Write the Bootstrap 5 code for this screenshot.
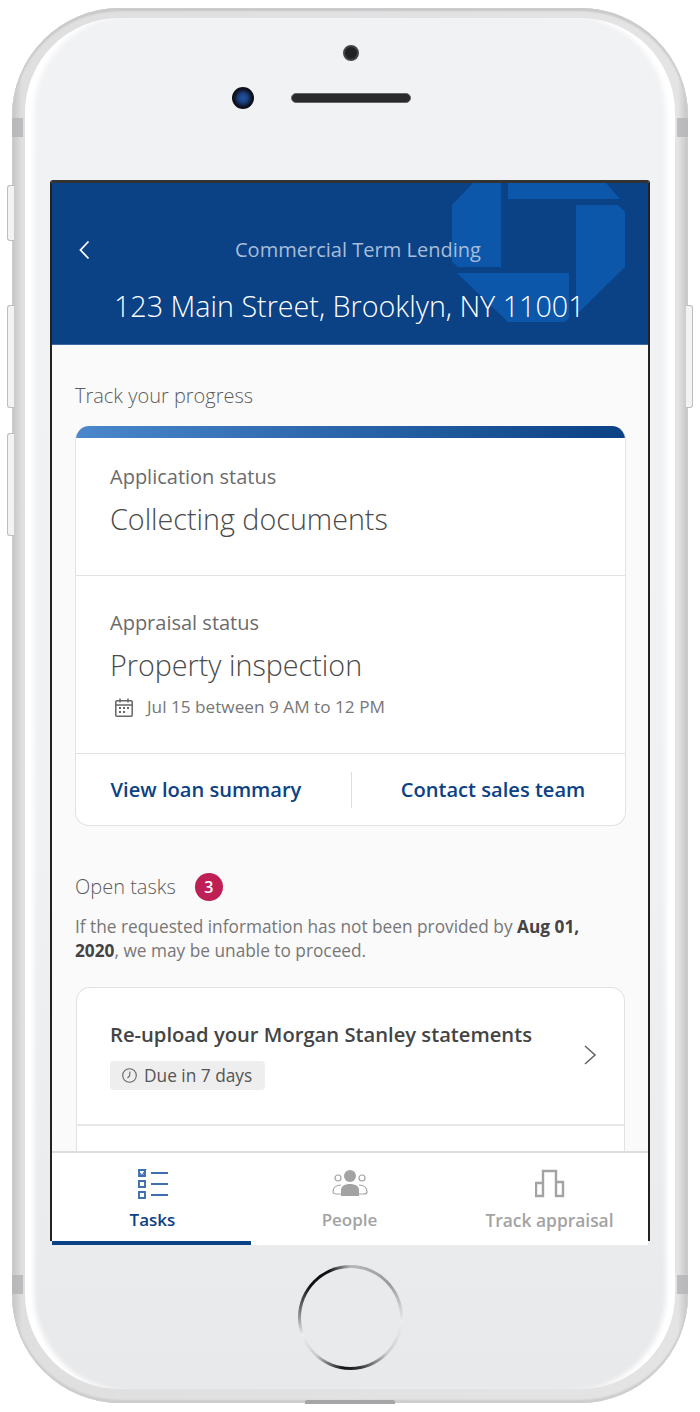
<!DOCTYPE html>
<html lang="en"><head><meta charset="utf-8"><title>Commercial Term Lending</title>
<link href="https://cdn.jsdelivr.net/npm/bootstrap@5.3.0/dist/css/bootstrap.min.css" rel="stylesheet">
<style>
html,body{margin:0;height:1412px;width:700px;overflow:hidden;background:#fff;font-family:"Open Sans","Liberation Sans",sans-serif}
.phone{position:relative;width:676px;height:1395px;margin:8px 0 0 12px;padding:10px 13px 14px;border-radius:108px;background:linear-gradient(90deg,#c4c4c6 0,#dfdfe0 1.5%,#e4e4e5 98.5%,#c4c4c6 100%);box-shadow:inset 0 0 2px 1px #cfcfd1,inset 0 3px 2px #c6c6c8,inset 0 -3px 2px #cccccd}
.shell{height:100%;display:flex;flex-direction:column;padding:0 25px;border-radius:95px;background:linear-gradient(180deg,#f1f2f4 0,#f0f1f3 60%,#e8e9eb 100%);box-shadow:inset 12px 0 5px -3px #fff,inset -12px 0 5px -3px #fff}
.bezel-top{height:162px;flex:none;position:relative}
.sensor{width:16px;height:16px;border-radius:50%;background:#222;border:2px solid #444;position:absolute;left:293px;top:27px}
.ear-row{position:absolute;left:182px;top:69px;display:flex;align-items:center;gap:37px}
.cam{width:22px;height:22px;border-radius:50%;background:radial-gradient(circle,#1c57b0 0,#1c3f7c 30%,#0b0f1c 60%,#1b1b1f 100%)}
.speaker{width:120px;height:10px;border-radius:5px;background:#2a2a2c;border:1px solid #666}
.side-btn{position:absolute;width:7px;border:1px solid #bdbdbf;border-right:0;background:#f3f3f3;border-radius:3px 0 0 3px}
.side-right{border:1px solid #bdbdbf;border-left:0;border-radius:0 3px 3px 0}
.btn1{left:-5px;top:177px;height:56px}.btn2{left:-5px;top:297px;height:103px}.btn3{left:-5px;top:425px;height:103px}.btn4{right:-5px;top:297px;height:103px}
.band{position:absolute;width:11px;height:19px;background:#b4b4b6;opacity:.8}
.band-a{left:0;top:110px}.band-b{right:0;top:110px}.band-c{left:0;top:1267px}.band-d{right:0;top:1267px}
.notch{position:absolute;left:293px;bottom:-1px;width:90px;height:4px;background:#a5a5a7;border-radius:2px 2px 0 0}
.screen{height:1061px;flex:none;display:flex;flex-direction:column;border-top:3px solid #333;border-left:2px solid #222;border-right:2px solid #222;border-radius:3px 3px 0 0;background:#fafafa;position:relative}
.app-head{height:162px;flex:none;background:#0b4185;position:relative;overflow:hidden;border-bottom:1px solid #3b6aa3}
.logo{position:absolute;left:-52px;top:-183px;width:700px;height:400px}
.head-in{position:relative;height:100%}
.back{position:absolute;left:26px;top:57px}
.sub-t{position:absolute;left:183px;top:53px;margin:0;font-size:20.05px;line-height:28px;font-weight:400;color:#a7bdd9;white-space:nowrap}
.main-t{position:absolute;left:62px;top:103px;margin:0;font-size:28.7px;line-height:40px;font-weight:300;color:#fff;white-space:nowrap}
.scroll{flex:1 1 auto;min-height:0;overflow:hidden;padding:0 23px}
.sec-t{font-size:20px;line-height:28px;font-weight:300;color:#5c5c5c;margin:37px 0 16px}
.track{background:#fff;border:1px solid #e2e2e2;border-top:0;border-radius:14px;overflow:hidden;width:551px}
.grad{height:12px;background:linear-gradient(90deg,#4a87cb,#0b4185)}
.st-block{padding:25px 34px 0;border-bottom:1px solid #e2e2e2}
.st-a{height:138px}.st-b{height:178px;padding-top:33px}
.st-l{font-size:20px;line-height:28px;font-weight:400;color:#6b6b6b;margin:0}
.st-v{font-size:28.7px;line-height:42px;font-weight:300;color:#4a4a4a;margin:7px 0 0}
.st-d{font-size:17.2px;line-height:24px;font-weight:400;color:#777;margin-top:9px;display:flex;align-items:center;gap:14px;padding-left:5px}
.act-row{height:71px;display:flex;align-items:center;padding-top:1px}
.act{text-align:center;font-size:20.1px;font-weight:600;color:#0b4185;text-decoration:none;white-space:nowrap}
.act-a{flex:0 0 275px;padding-right:15px}.act-b{flex:1 1 0;padding-left:9px}
.vr-line{width:1px;height:36px;background:#ddd;flex:none}
.open-row{display:flex;align-items:center;gap:19px;margin:47px 0 14px}
.open-row .sec-t{margin:0}
.count{width:28px;height:28px;border-radius:50%;background:#be1f54;color:#fff;font-size:16px;font-weight:600;display:flex;align-items:center;justify-content:center}
.warn{font-size:17.28px;line-height:24px;font-weight:400;color:#777;margin:0 0 24px;padding-right:14px}
.warn b{font-weight:700;color:#444}
.task-card{background:#fff;border:1px solid #e2e2e2;border-bottom:0;border-radius:14px 14px 0 0;width:549px;margin-left:1px}
.task-item{height:138px;padding:31px 33px 0;position:relative;border-bottom:2px solid #e8e8e8}
.task-item:last-child{border-bottom:0}
.task-t{font-size:20.2px;line-height:30px;font-weight:600;color:#444;margin:0;white-space:nowrap}
.due{display:inline-flex;align-items:center;gap:7px;height:29px;padding:0 13px 0 12px;margin-top:12px;background:#eee;border-radius:4px;font-size:17.3px;color:#555;font-weight:400}
.chev{position:absolute;right:27px;top:56px}
.tabs{height:94px;flex:none;background:#fff;border-top:2px solid #ddd;display:flex;margin-bottom:-4px;position:relative;z-index:2}
.tab{flex:0 0 auto;display:flex;flex-direction:column;align-items:center;color:#a3a3a3;font-size:17px;font-weight:600;text-decoration:none;padding-top:16px;height:92px}
.tab svg{display:block;height:30px;margin-bottom:8px}
.tab1{width:199px;padding-left:2px;color:#0b4185;border-bottom:4px solid #0b4185}
.tab2{width:197px}.tab3{width:200px;padding-left:3px;font-size:17.4px}
.bezel-bot{flex:1 1 auto;display:flex;justify-content:center;padding-top:24px}
.home{width:105px;height:105px;border-radius:50%;padding:3px;background:conic-gradient(from 0deg,#b8b8b8 0,#999 50deg,#eee 95deg,#ccc 135deg,#333 170deg,#111 188deg,#ccc 222deg,#eee 250deg,#777 278deg,#111 308deg,#111 335deg,#b8b8b8 360deg)}
.home-in{width:100%;height:100%;border-radius:50%;background:#e9eaec}
</style></head><body>
<div class="phone">
<span class="side-btn btn1"></span><span class="side-btn btn2"></span><span class="side-btn btn3"></span><span class="side-btn side-right btn4"></span>
<span class="band band-a"></span><span class="band band-b"></span><span class="band band-c"></span><span class="band band-d"></span><span class="notch"></span>
<div class="shell">
<div class="bezel-top"><span class="sensor"></span><div class="ear-row"><span class="cam"></span><span class="speaker"></span></div></div>
<div class="screen">
<header class="app-head">
<svg class="logo" viewBox="0 0 700 400" fill="#0c57a9"><path d="M473 183H501V267H458L452 262V205Z"/><path d="M508 183H606L620 199H508Z"/><path d="M576 205H618L625 212V267L576 315Z"/><path d="M457 273H569V318L565 322H508Z"/></svg>
<div class="head-in">
<svg class="back" width="12" height="20" viewBox="0 0 12 20" fill="none" stroke="#fff" stroke-width="1.8"><path d="M10.5 1.5 2.5 10l8 8.5"/></svg>
<p class="sub-t">Commercial Term Lending</p>
<p class="main-t">123 Main Street, Brooklyn, NY 11001</p>
</div></header>
<main class="scroll">
<p class="sec-t">Track your progress</p>
<section class="track">
<div class="grad"></div>
<div class="st-block st-a"><p class="st-l">Application status</p><p class="st-v">Collecting documents</p></div>
<div class="st-block st-b"><p class="st-l">Appraisal status</p><p class="st-v">Property inspection</p>
<div class="st-d"><svg width="18" height="19" viewBox="0 0 18 19" fill="none" stroke="#666" stroke-width="1.5"><rect x=".8" y="2.8" width="16.4" height="15.4" rx="1"/><path d="M.8 7h16.4M5 .5v4M13 .5v4"/><path d="M4 10h2M8 10h2M12 10h2M4 14h2M8 14h2" stroke-width="2"/></svg><span>Jul 15 between 9 AM to 12 PM</span></div></div>
<div class="act-row"><a class="act act-a" href="#">View loan summary</a><span class="vr-line"></span><a class="act act-b" href="#">Contact sales team</a></div>
</section>
<div class="open-row"><p class="sec-t">Open tasks</p><span class="count">3</span></div>
<p class="warn">If the requested information has not been provided by <b>Aug 01, 2020</b>, we may be unable to proceed.</p>
<section class="task-card"><div class="task-item"><p class="task-t">Re-upload your Morgan Stanley statements</p>
<span class="due"><svg width="15" height="15" viewBox="0 0 15 15" fill="none" stroke="#666" stroke-width="1.1"><circle cx="7.5" cy="7.5" r="6.8"/><path d="M8 3.5 7.5 8 5.5 10"/></svg>Due in 7 days</span>
<svg class="chev" width="14" height="22" viewBox="0 0 14 22" fill="none" stroke="#666" stroke-width="1.6"><path d="M2 2l10 9-10 9"/></svg></div><div class="task-item"></div></section>
</main>
<nav class="tabs">
<a class="tab tab1" href="#"><svg width="30" height="30" viewBox="0 0 30 30" fill="none" stroke="#3f6fae" stroke-width="1.9"><path d="M1 2h6v6H1zM1 13h6v6H1zM1 24h6v6H1z" transform="translate(0 -1)"/><path d="M13 5h17M13 16h17M13 27h17" stroke-width="1.8" transform="translate(0 -1)"/><path d="M2 4l2 3 4-7" stroke-width="1.3"/></svg>Tasks</a>
<a class="tab tab2" href="#"><svg width="36" height="30" viewBox="0 0 36 30" fill="none" stroke="#a3a3a3" stroke-width="1.2"><circle cx="18" cy="7" r="6" fill="#a3a3a3" stroke="none"/><circle cx="6" cy="9" r="3"/><circle cx="30" cy="9" r="3"/><path d="M9 25H4c-2 0-3-1-3-2 0-4 3-7 8-7M27 25h5c2 0 3-1 3-2 0-4-3-7-8-7"/><path d="M9 27v-6c0-4 4-6 9-6s9 2 9 6v6z" fill="#a3a3a3" stroke="none"/></svg>People</a>
<a class="tab tab3" href="#"><svg width="30" height="30" viewBox="0 0 30 30" fill="none" stroke="#a3a3a3" stroke-width="2.4"><path d="M9 27V2h13v25M9 27V14H2v13zM22 27V13h7v14z" transform="translate(-1 0)"/></svg>Track appraisal</a>
</nav>
</div>
<div class="bezel-bot"><div class="home"><div class="home-in"></div></div></div>
</div></div>
<script src="https://cdn.jsdelivr.net/npm/bootstrap@5.3.0/dist/js/bootstrap.bundle.min.js"></script>
</body></html>
